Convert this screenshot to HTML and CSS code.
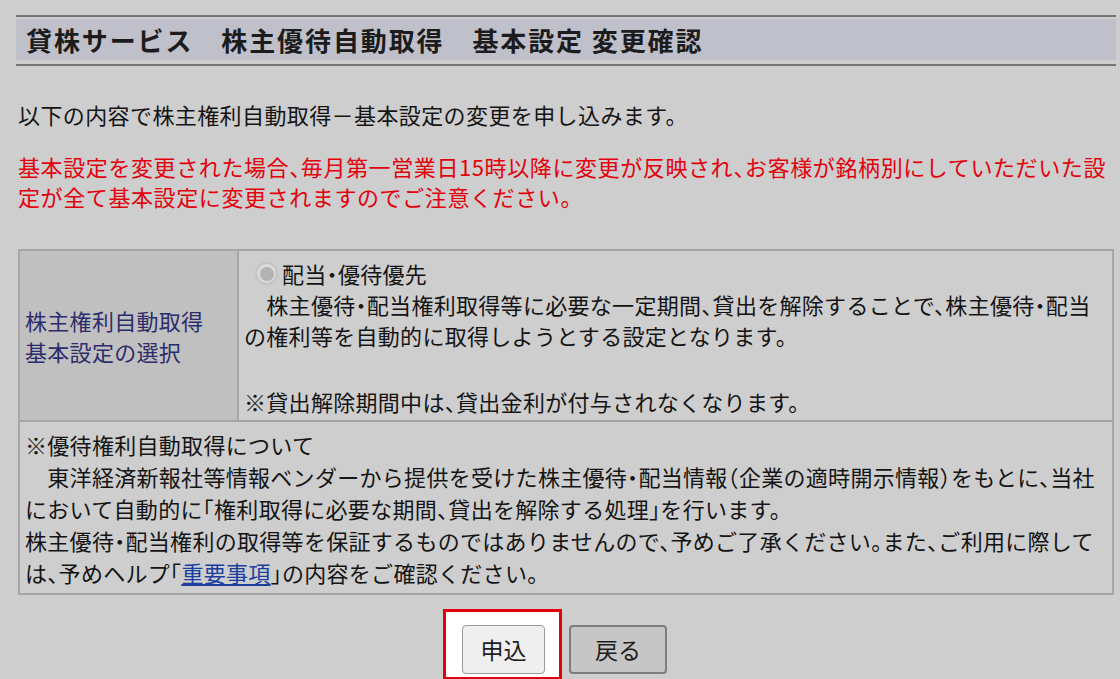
FILE: index.html
```html
<!DOCTYPE html>
<html lang="ja">
<head>
<meta charset="utf-8">
<title>貸株サービス 株主優待自動取得 基本設定 変更確認</title>
<link rel="stylesheet" href="styles.css">
</head>
<body>
<div class="page">
  <div class="heading">
    <div class="heading-bar"><h1 class="heading-title">貸株サービス　株主優待自動取得　基本設定 変更確認</h1></div>
  </div>

  <p class="lead">以下の内容で株主権利自動取得－基本設定の変更を申し込みます。</p>

  <p class="warn">基本設定を変更された場合、毎月第一営業日15時以降に変更が反映され、お客様が銘柄別にしていただいた設<br>定が全て基本設定に変更されますのでご注意ください。</p>

  <table class="settings">
    <tr class="row-select">
      <th class="label">株主権利自動取得<br>基本設定の選択</th>
      <td class="value">
        <div class="option"><span class="radio"><span class="radio-dot"></span></span><span>配当・優待優先</span></div>
        <div class="desc">　株主優待・配当権利取得等に必要な一定期間、貸出を解除することで、株主優待・配当<br>の権利等を自動的に取得しようとする設定となります。</div>
        <div class="note">※貸出解除期間中は、貸出金利が付与されなくなります。</div>
      </td>
    </tr>
    <tr class="row-info">
      <td class="info" colspan="2">※優待権利自動取得について<br>　東洋経済新報社等情報ベンダーから提供を受けた株主優待・配当情報（企業の適時開示情報）をもとに、当社<br>において自動的に「権利取得に必要な期間、貸出を解除する処理」を行います。<br>株主優待・配当権利の取得等を保証するものではありませんので、予めご了承ください。また、ご利用に際して<br>は、予めヘルプ「<a class="link" href="#">重要事項</a>」の内容をご確認ください。</td>
    </tr>
  </table>

  <div class="actions">
    <div class="highlight"><button class="btn btn-submit" type="button">申込</button></div>
    <button class="btn btn-back" type="button">戻る</button>
  </div>
</div>
</body>
</html>
```

FILE: styles.css
```css
html, body {
  margin: 0;
  padding: 0;
  background: #cecece;
}

body {
  font-family: "Noto Sans CJK JP", "Noto Sans", sans-serif;
  color: #141414;
  font-feature-settings: "halt" 1;
}

.page {
  padding: 15px 4px 0 16px;
}

.heading {
  border-top: 2px solid #747474;
  border-bottom: 2px solid #747474;
  padding: 2px 0 4px;
}

.heading-bar {
  background: #c0c0cb;
  height: 41px;
  display: flex;
  align-items: center;
  padding-left: 10px;
}

.heading-title {
  margin: 0;
  font-size: 26px;
  font-weight: 700;
  letter-spacing: 1.9px;
  line-height: 1;
  color: #1c1c1c;
}

.lead {
  margin: 33px 0 0 2px;
  font-size: 22px;
  line-height: 30px;
  letter-spacing: 0.4px;
}

.warn {
  margin: 22px 0 0 2px;
  font-size: 22px;
  line-height: 30px;
  letter-spacing: 0.6px;
  color: #e3000c;
}

.settings {
  margin: 38px 0 0 2px;
  width: 1096px;
  border-collapse: collapse;
  border: 2px solid #a6a6a6;
  font-size: 22px;
  letter-spacing: 0.3px;
}

.settings th,
.settings td {
  border: 2px solid #a6a6a6;
  padding: 0;
  vertical-align: top;
}

.label {
  width: 212px;
  background: #c0c0c0;
  color: #2c2c6c;
  font-weight: 400;
  text-align: left;
  vertical-align: middle !important;
  line-height: 31px;
  padding-left: 5px !important;
}

.value {
  background: #cecece;
  padding: 7px 6px 3px 5px !important;
  line-height: 31px;
}

.option {
  display: flex;
  align-items: center;
}

.radio {
  width: 19px;
  height: 19px;
  border-radius: 50%;
  border: 2px solid #c4c4c4;
  background: #dadada;
  display: flex;
  align-items: center;
  justify-content: center;
  margin: 0 4px 0 11px;
}

.radio-dot {
  width: 14px;
  height: 14px;
  border-radius: 50%;
  background: #b3b3b3;
}

.note {
  margin-top: 35px;
}

.info {
  padding: 6px 6px 5px 5px !important;
  line-height: 32px;
}

.link {
  color: #1b3f9e;
  text-decoration: underline;
}

.actions {
  display: flex;
  justify-content: center;
  align-items: flex-start;
  gap: 7px;
  margin-top: 14px;
  padding-right: 22px;
}

.highlight {
  border: 3px solid #e3000c;
  background: #ffffff;
  padding: 13px 14px 3px 16px;
}

.btn {
  font-family: "Noto Sans CJK JP", "Noto Sans", sans-serif;
  font-size: 23px;
  color: #1e1e1e;
  height: 49px;
  border-radius: 4px;
  padding: 0;
  line-height: 1;
}

.btn-submit {
  display: block;
  width: 83px;
  background: #efefef;
  border: 1px solid #9a9a9a;
}

.btn-back {
  width: 98px;
  margin-top: 16px;
  background: #c6c6c6;
  border: 2px solid #7d7d7d;
}
```
